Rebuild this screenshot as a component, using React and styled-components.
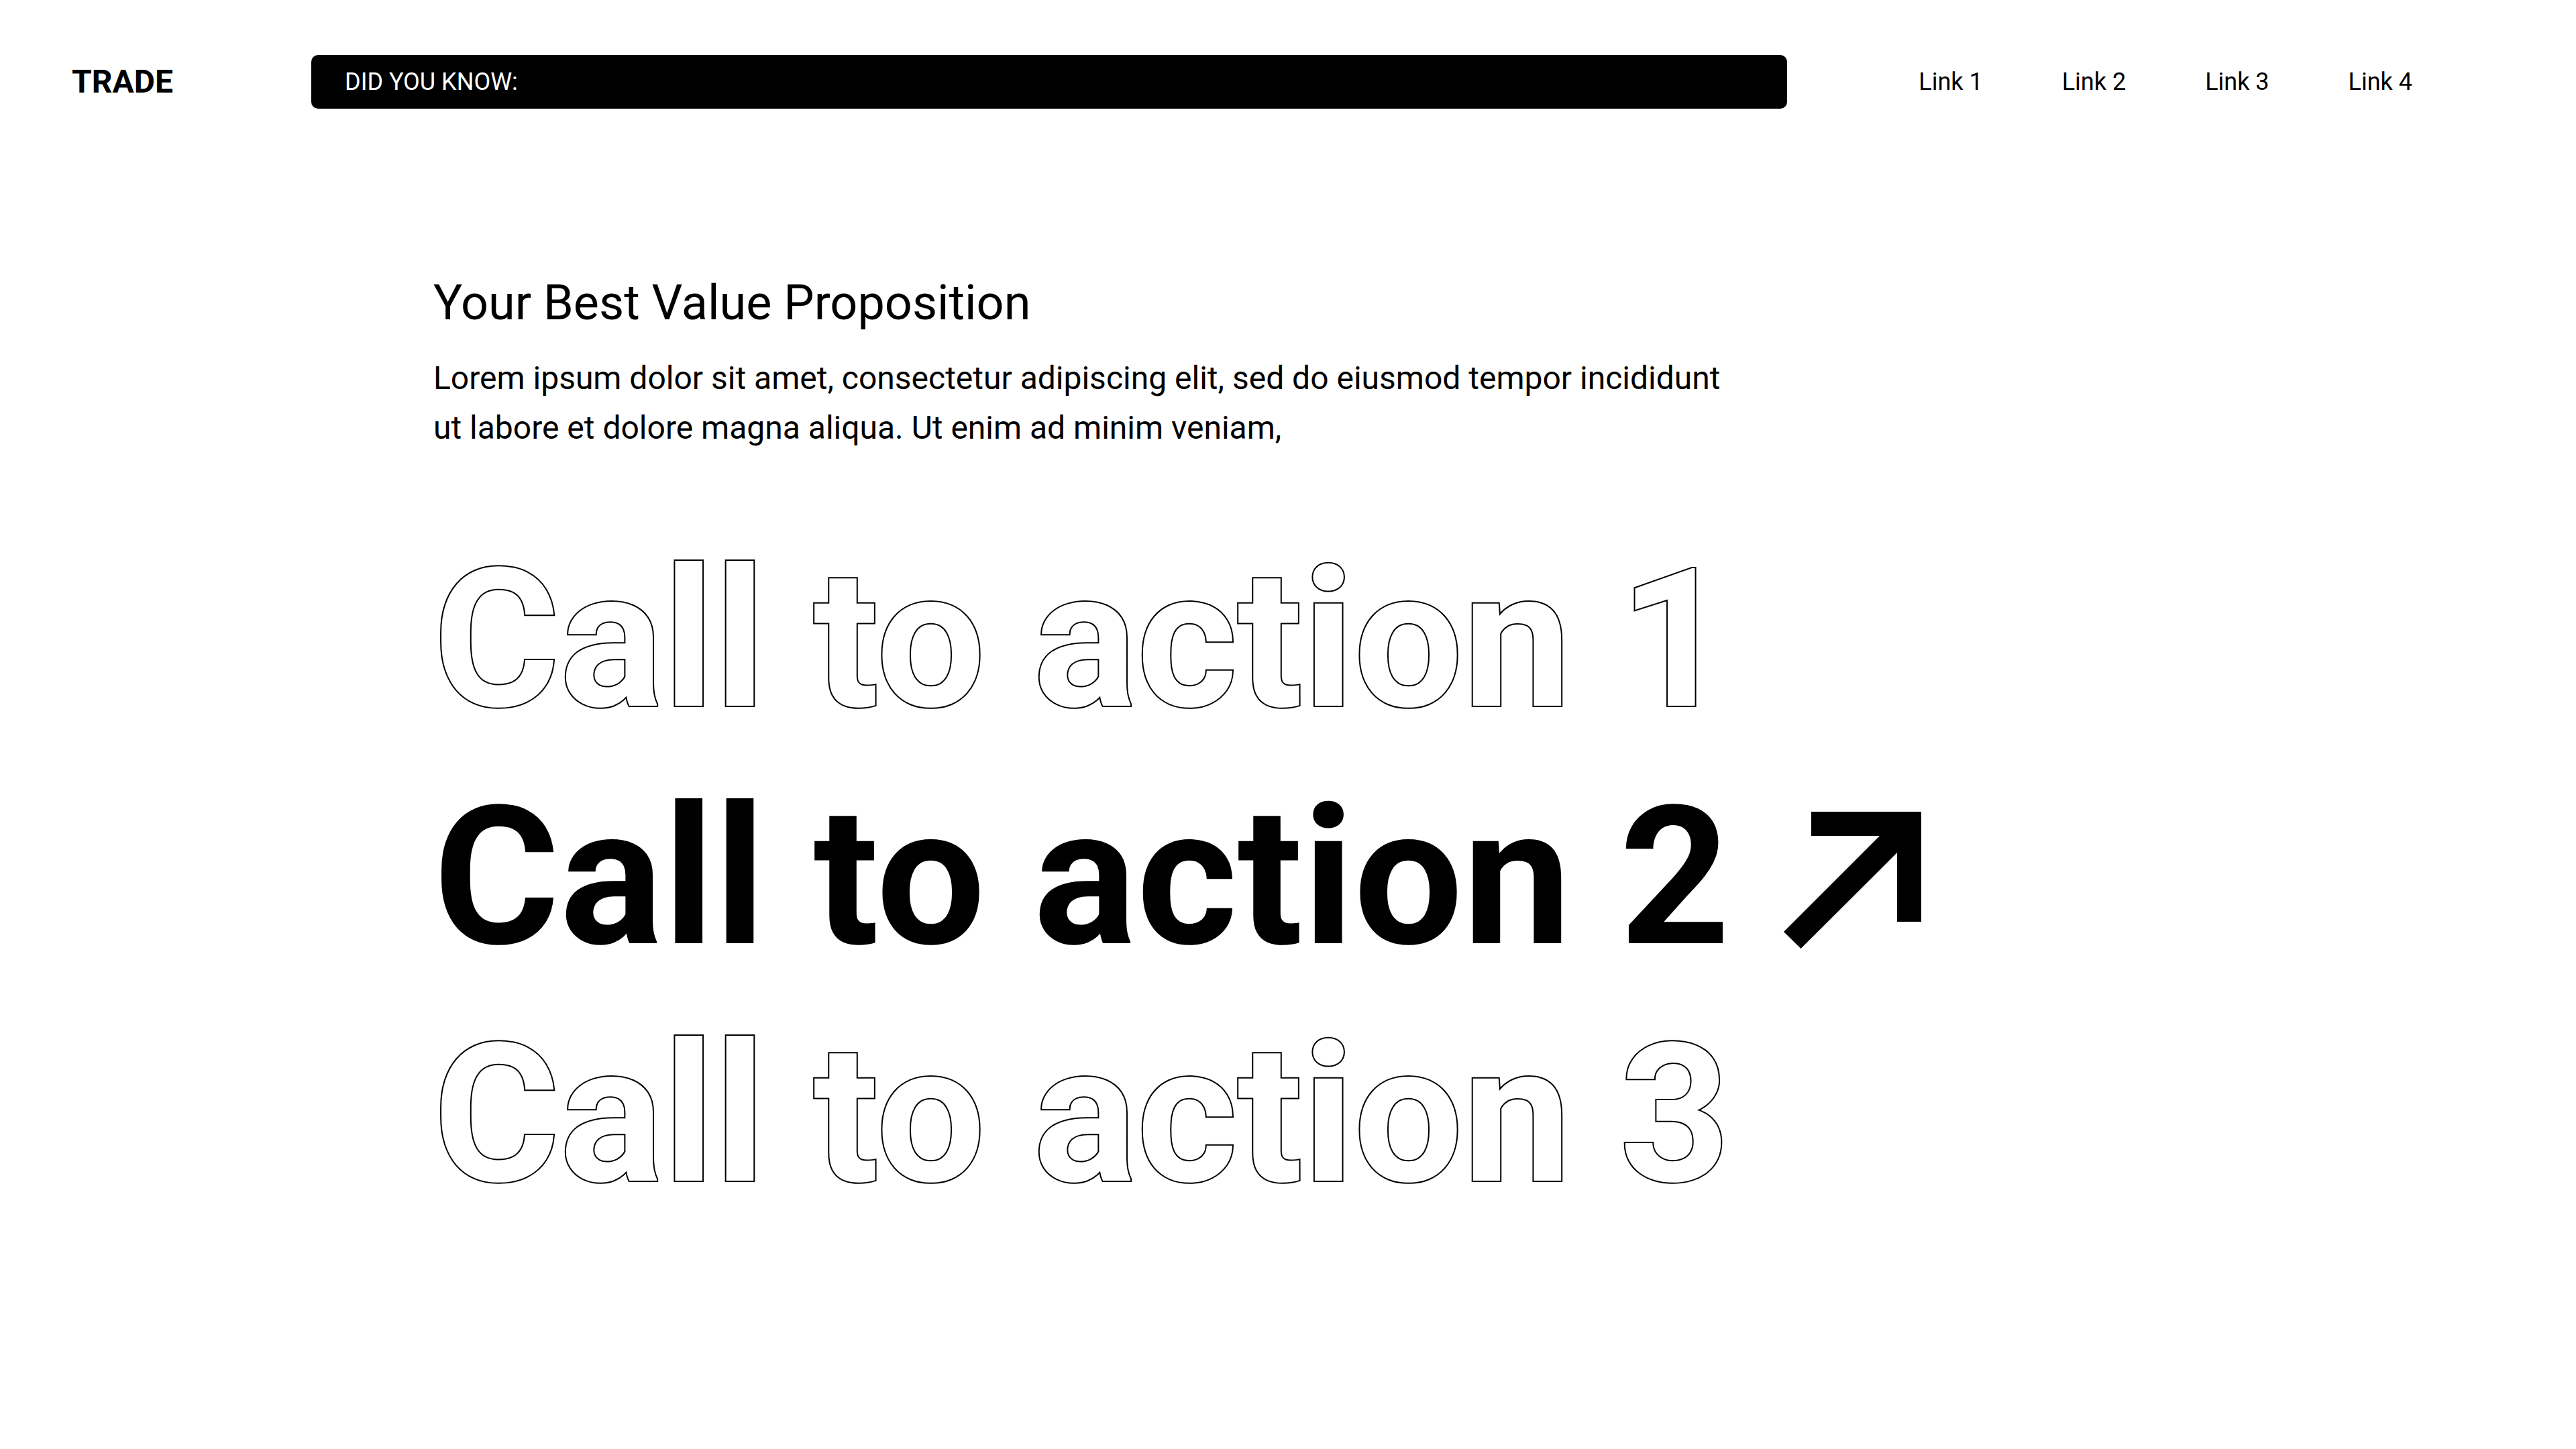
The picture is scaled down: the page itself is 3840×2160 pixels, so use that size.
import React from 'react';
import styled, { createGlobalStyle, css } from 'styled-components';

const GlobalStyle = createGlobalStyle`
  *, *::before, *::after { box-sizing: border-box; }
  body {
    margin: 0;
    background: #fff;
    color: #000;
    font-family: Roboto, "Liberation Sans", sans-serif;
  }
`;

const Header = styled.header`
  display: flex;
  align-items: center;
  padding: 82px 244px 0 107px;
`;

const Brand = styled.a`
  flex: 0 0 357px;
  color: inherit;
  font-size: 48px;
  font-weight: 700;
  line-height: 56px;
  text-decoration: none;
`;

const Notice = styled.div`
  flex: 1;
  height: 80px;
  padding: 0 50px;
  border-radius: 10px;
  background: #000;
  color: #fff;
  font-size: 36px;
  line-height: 80px;
`;

const Nav = styled.nav`
  display: flex;
  gap: 118px;
  margin-left: 196px;
`;

const NavLink = styled.a`
  color: inherit;
  font-size: 36px;
  line-height: 80px;
  text-decoration: none;
`;

const Main = styled.main`
  padding: 248px 240px 240px 646px;
`;

const Title = styled.h1`
  margin: 0;
  font-size: 72px;
  font-weight: 400;
  line-height: 84px;
`;

const Lead = styled.p`
  max-width: 1960px;
  margin: 33px 0 0;
  font-size: 48px;
  line-height: 74px;
`;

const Actions = styled.div`
  display: flex;
  flex-direction: column;
  align-items: flex-start;
  margin-top: 102px;
`;

const Action = styled.a`
  display: flex;
  align-items: center;
  gap: 80px;
  font-size: 288px;
  font-weight: 700;
  line-height: 354px;
  text-decoration: none;
  white-space: nowrap;
  ${({ $solid }) =>
    $solid
      ? css`
          color: #000;
        `
      : css`
          color: #fff;
          -webkit-text-stroke: 4px #000;
          paint-order: stroke fill;
        `}
`;

const Arrow = styled.svg`
  display: block;
  width: 206px;
  height: 214px;
`;

const links = ['Link 1', 'Link 2', 'Link 3', 'Link 4'];
const actions = [
  { label: 'Call to action 1' },
  { label: 'Call to action 2', solid: true },
  { label: 'Call to action 3' },
];

export default function App() {
  return (
    <>
      <GlobalStyle />
      <Header>
        <Brand href="#">TRADE</Brand>
        <Notice>DID YOU KNOW:</Notice>
        <Nav>
          {links.map((label) => (
            <NavLink key={label} href="#">{label}</NavLink>
          ))}
        </Nav>
      </Header>
      <Main>
        <Title>Your Best Value Proposition</Title>
        <Lead>
          Lorem ipsum dolor sit amet, consectetur adipiscing elit, sed do eiusmod tempor
          incididunt ut labore et dolore magna aliqua. Ut enim ad minim veniam,
        </Lead>
        <Actions>
          {actions.map(({ label, solid }) => (
            <Action key={label} href="#" $solid={solid}>
              {label}
              {solid && (
                <Arrow viewBox="0 -8 206 214" aria-hidden="true">
                  <path d="M41 1H205V165H169V62L25.5 205L0 180L143 37H41Z" fill="currentColor" />
                </Arrow>
              )}
            </Action>
          ))}
        </Actions>
      </Main>
    </>
  );
}
